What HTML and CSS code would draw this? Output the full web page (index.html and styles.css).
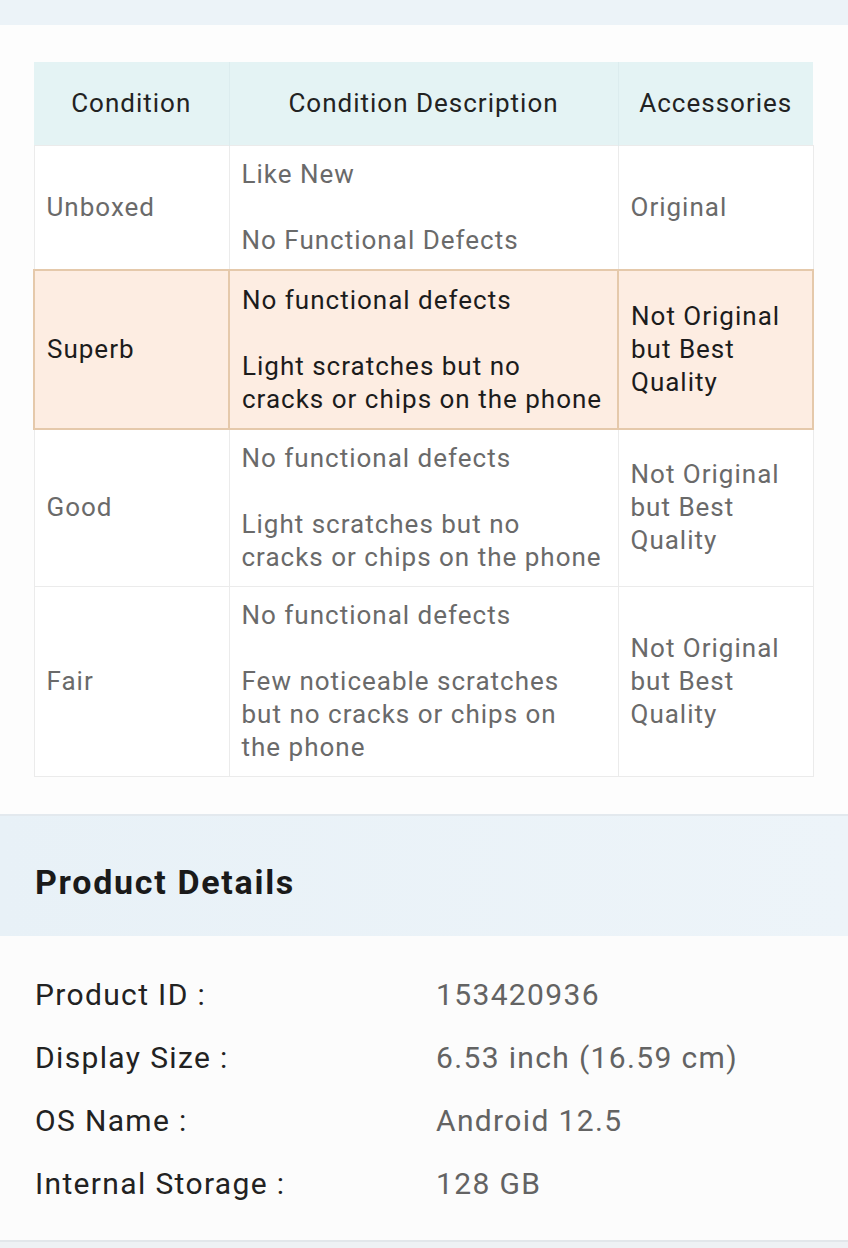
FILE: index.html
```html
<!DOCTYPE html>
<html lang="en">
<head>
<meta charset="utf-8">
<title>Condition & Product Details</title>
<link rel="stylesheet" href="styles.css">
</head>
<body>
<div class="top-band"></div>
<section class="conditions">
  <table class="cond-table">
    <colgroup>
      <col class="c1"><col class="c2"><col class="c3">
    </colgroup>
    <thead>
      <tr>
        <th>Condition</th>
        <th>Condition Description</th>
        <th>Accessories</th>
      </tr>
    </thead>
    <tbody>
      <tr>
        <td>Unboxed</td>
        <td class="desc">Like New<br><br>No Functional Defects</td>
        <td>Original</td>
      </tr>
      <tr class="active">
        <td>Superb</td>
        <td class="desc">No functional defects<br><br>Light scratches but no cracks or chips on the phone</td>
        <td>Not Original but Best Quality</td>
      </tr>
      <tr>
        <td>Good</td>
        <td class="desc">No functional defects<br><br>Light scratches but no cracks or chips on the phone</td>
        <td>Not Original but Best Quality</td>
      </tr>
      <tr>
        <td>Fair</td>
        <td class="desc">No functional defects<br><br>Few noticeable scratches but no cracks or chips on the phone</td>
        <td>Not Original but Best Quality</td>
      </tr>
    </tbody>
  </table>
</section>
<section class="details-head">
  <h2>Product Details</h2>
</section>
<section class="details">
  <dl class="spec-list">
    <dt>Product ID :</dt><dd>153420936</dd>
    <dt>Display Size :</dt><dd>6.53 inch (16.59 cm)</dd>
    <dt>OS Name :</dt><dd>Android 12.5</dd>
    <dt>Internal Storage :</dt><dd>128 GB</dd>
  </dl>
</section>
<div class="bottom-band"></div>
</body>
</html>
```
FILE: styles.css
```css
* { box-sizing: border-box; }
html, body {
  margin: 0;
  padding: 0;
  background: #fbfcfc;
  font-family: Roboto, "Liberation Sans", Arial, sans-serif;
  width: 848px;
  overflow: hidden;
}
.top-band {
  height: 25px;
  background: #ecf3f8;
}
.conditions {
  padding: 37px 36px 37px 33px;
  background: #fdfdfd;
}
.cond-table {
  width: 779px;
  table-layout: fixed;
  border-collapse: collapse;
  font-size: 26px;
  line-height: 33px;
  letter-spacing: 1px;
}
.c1 { width: 195px; }
.c2 { width: 389px; }
.c3 { width: 195px; }
.cond-table th {
  height: 83px;
  background: #e4f3f4;
  color: #222;
  font-weight: 400;
  text-align: center;
  padding: 0 6px;
  border-left: 1px solid #dcecee;
}
.cond-table th:first-child { border-left: none; }
.cond-table td {
  color: #6a6a6a;
  padding: 12px 10px 12px 12px;
  vertical-align: middle;
  border: 1px solid #ebebeb;
  background: #fff;
}
.cond-table td.desc {
  vertical-align: top;
  padding-right: 15.5px;
}
.cond-table tr.active td {
  background: #fdede2;
  color: #1c1c1c;
  border-color: #e5c9ab;
  border-width: 2px;
}
.cond-table tr.active td.desc {
  padding-top: 13px;
  padding-right: 12px;
}
.details-head {
  height: 122px;
  background: linear-gradient(90deg, #e8f1f7, #edf4f9);
  border-top: 2px solid #e3e9ee;
  display: flex;
  align-items: center;
  padding: 12px 35px 0;
}
.details-head h2 {
  margin: 0;
  font-size: 34px;
  font-weight: 700;
  color: #1a1a1a;
  letter-spacing: 1.7px;
}
.details {
  background: #fcfcfc;
  padding: 27px 35px 25px;
}
.spec-list {
  margin: 0;
  display: grid;
  grid-template-columns: 401px 1fr;
  font-size: 30px;
  line-height: 63px;
  letter-spacing: 1.35px;
}
.spec-list dt { color: #222; }
.spec-list dd { margin: 0; color: #636363; }
.bottom-band {
  height: 12px;
  background: #eef1f4;
  border-top: 2px solid #e2e6ea;
}
```
